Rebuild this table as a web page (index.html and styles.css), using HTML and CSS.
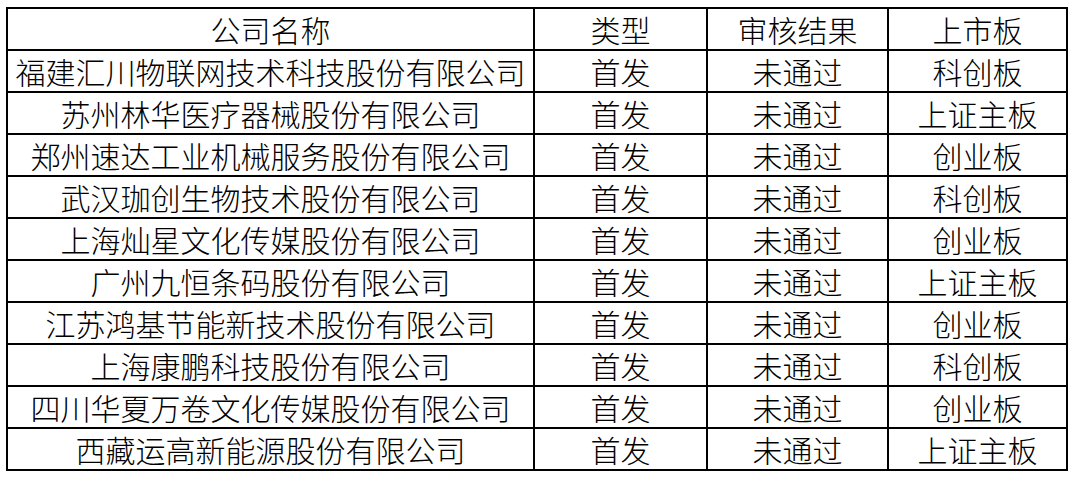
FILE: index.html
```html
<!DOCTYPE html>
<html lang="zh-CN">
<head>
<meta charset="utf-8">
<link rel="stylesheet" href="styles.css">
</head>
<body>
<table class="ipo">
  <colgroup>
    <col class="c-name"><col class="c-type"><col class="c-result"><col class="c-board">
  </colgroup>
  <tr><td>公司名称</td><td>类型</td><td>审核结果</td><td>上市板</td></tr>
  <tr><td>福建汇川物联网技术科技股份有限公司</td><td>首发</td><td>未通过</td><td>科创板</td></tr>
  <tr><td>苏州林华医疗器械股份有限公司</td><td>首发</td><td>未通过</td><td>上证主板</td></tr>
  <tr><td>郑州速达工业机械服务股份有限公司</td><td>首发</td><td>未通过</td><td>创业板</td></tr>
  <tr><td>武汉珈创生物技术股份有限公司</td><td>首发</td><td>未通过</td><td>科创板</td></tr>
  <tr><td>上海灿星文化传媒股份有限公司</td><td>首发</td><td>未通过</td><td>创业板</td></tr>
  <tr><td>广州九恒条码股份有限公司</td><td>首发</td><td>未通过</td><td>上证主板</td></tr>
  <tr><td>江苏鸿基节能新技术股份有限公司</td><td>首发</td><td>未通过</td><td>创业板</td></tr>
  <tr><td>上海康鹏科技股份有限公司</td><td>首发</td><td>未通过</td><td>科创板</td></tr>
  <tr><td>四川华夏万卷文化传媒股份有限公司</td><td>首发</td><td>未通过</td><td>创业板</td></tr>
  <tr><td>西藏运高新能源股份有限公司</td><td>首发</td><td>未通过</td><td>上证主板</td></tr>
</table>
</body>
</html>
```

FILE: styles.css
```css
html, body {
  margin: 0;
  padding: 0;
  background: #ffffff;
}
body {
  padding: 7px 0 0 6px;
  font-family: "Noto Sans CJK SC", "Noto Sans", sans-serif;
  color: #000000;
}
.ipo {
  border-collapse: collapse;
  table-layout: fixed;
  width: 1060px;
}
.c-name { width: 527px; }
.c-type { width: 173px; }
.c-result { width: 181px; }
.c-board { width: 179px; }
.ipo td {
  border: 2px solid #000000;
  height: 40px;
  padding: 0;
  text-align: center;
  vertical-align: middle;
  font-size: 30px;
  line-height: 40px;
  font-weight: 300;
  white-space: nowrap;
}
```
